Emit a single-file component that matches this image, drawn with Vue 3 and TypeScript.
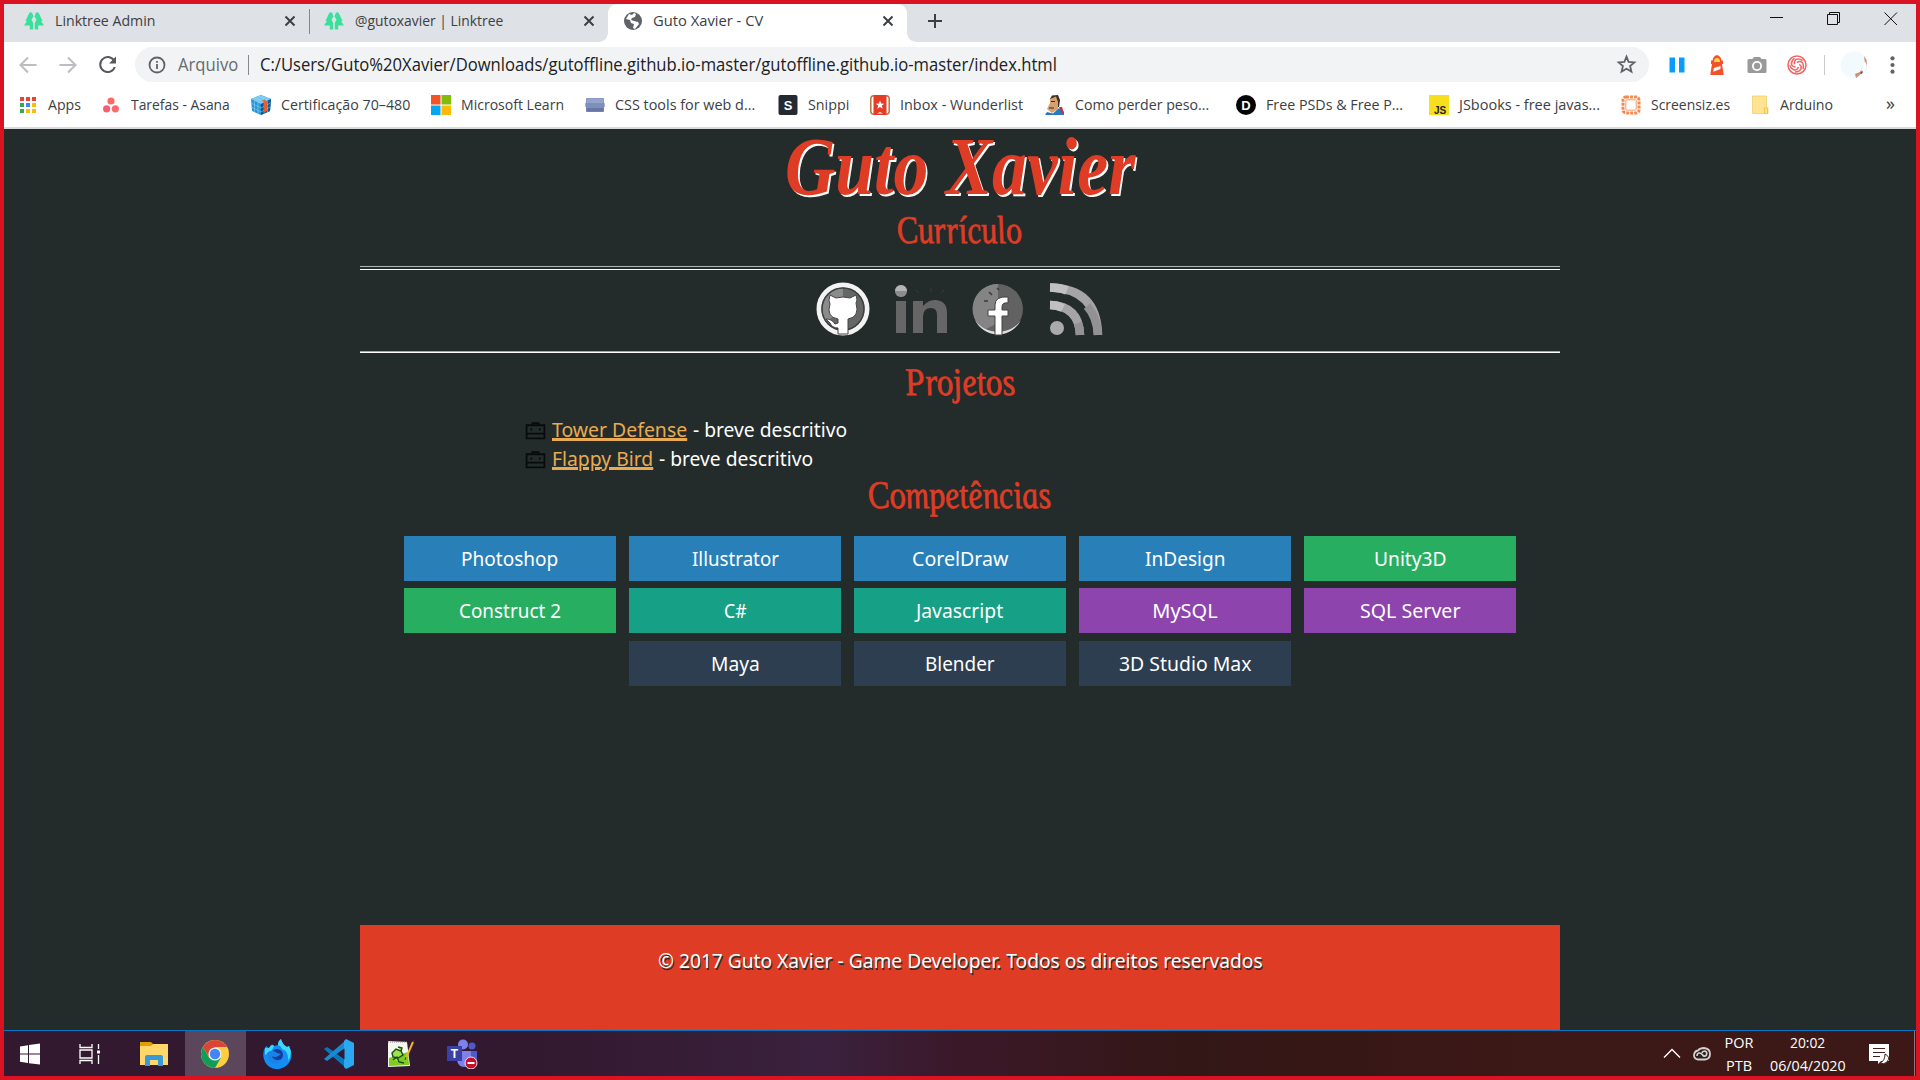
<script setup lang="ts">
import type { Directive } from 'vue'

interface Bookmark { icon: string; label: string; text: number; box: number }
interface Skill { name: string; kind: string; width: number }

// Condenses or widens a line of text to its nominal width.
const vFit: Directive<HTMLElement, number> = {
  mounted(el, binding) {
    const natural = el.offsetWidth
    if (!natural) return
    const scale = binding.value / natural
    el.style.transform = `scaleX(${scale})`
    el.style.marginRight = `${binding.value - natural}px`
  },
}

const bookmarks: Bookmark[] = [
  { icon: 'apps', label: 'Apps', text: 33, box: 83 },
  { icon: 'asana', label: 'Tarefas - Asana', text: 99, box: 150 },
  { icon: 'cube', label: 'Certificação 70–480', text: 129, box: 180 },
  { icon: 'ms', label: 'Microsoft Learn', text: 103, box: 154 },
  { icon: 'css', label: 'CSS tools for web d...', text: 140, box: 192.5 },
  { icon: 'snippi', label: 'Snippi', text: 41, box: 92.5 },
  { icon: 'wunder', label: 'Inbox - Wunderlist', text: 123, box: 174.5 },
  { icon: 'man', label: 'Como perder peso...', text: 134, box: 191.5 },
  { icon: 'psd', label: 'Free PSDs & Free P...', text: 137, box: 193 },
  { icon: 'js', label: 'JSbooks - free javas...', text: 141, box: 191.5 },
  { icon: 'screen', label: 'Screensiz.es', text: 79, box: 129.5 },
  { icon: 'folder', label: 'Arduino', text: 53, box: 136 },
]

const skills: Skill[] = [
  { name: 'Photoshop', kind: 'blue', width: 97 },
  { name: 'Illustrator', kind: 'blue', width: 87 },
  { name: 'CorelDraw', kind: 'blue', width: 96 },
  { name: 'InDesign', kind: 'blue', width: 80 },
  { name: 'Unity3D', kind: 'green', width: 73 },
  { name: 'Construct 2', kind: 'green', width: 102 },
  { name: 'C#', kind: 'teal', width: 23 },
  { name: 'Javascript', kind: 'teal', width: 87 },
  { name: 'MySQL', kind: 'purple', width: 65 },
  { name: 'SQL Server', kind: 'purple', width: 101 },
  { name: 'Maya', kind: 'navy', width: 49 },
  { name: 'Blender', kind: 'navy', width: 70 },
  { name: '3D Studio Max', kind: 'navy', width: 133 },
]

const projects = [
  { name: 'Tower Defense', width: 135 },
  { name: 'Flappy Bird', width: 101.5 },
]
</script>

<template>
  <div class="screen">
    <header class="tabs">
      <div v-for="(t, i) in [{ n: 'Linktree Admin', w: 100 }, { n: '@gutoxavier | Linktree', w: 148 }]" :key="t.n" class="tab" :class="{ second: i === 1 }">
        <svg class="fav" viewBox="0 0 20 20"><path fill="#39e09b" d="M5.500 1.500H8L9.500 5.500 7.500 8.500 9.200 12V18.500H5.800V14.500H0L3 10H1.500ZM14.500 1.500H12L10.500 5.500 12.500 8.500 10.800 12V18.500H14.200V14.500H20L17 10H18.500Z" /></svg>
        <span class="tab-name"><span v-fit="t.w" class="fit">{{ t.n }}</span></span>
        <svg class="close" viewBox="0 0 12 12"><path d="M1.500 1.500 10.500 10.500M10.500 1.500 1.500 10.500" /></svg>
      </div>
      <div class="tab active">
        <svg class="fav globe" viewBox="0 0 20 20"><circle cx="10" cy="10" r="9" fill="#5f6368" /><path fill="#fff" d="M3 8 7 9 8 12 11 13 10 17 12 18 16 13 15 11 11 10 8 9 9 7 12 6 13 3 11 2 9 4 6 3Z" /></svg>
        <span class="tab-name"><span v-fit="110" class="fit">Guto Xavier - CV</span></span>
        <svg class="close" viewBox="0 0 12 12"><path d="M1.500 1.500 10.500 10.500M10.500 1.500 1.500 10.500" /></svg>
      </div>
      <svg class="plus" viewBox="0 0 16 16"><path d="M8 1V15M1 8H15" /></svg>
      <div class="window-buttons">
        <svg viewBox="0 0 14 14"><path d="M0 6.500H13" /></svg>
        <svg viewBox="0 0 14 14"><path d="M.5 2.500H10.500V12.500H.5ZM2.500 2.500V.5H12.500V10.500H10.500" /></svg>
        <svg viewBox="0 0 14 14"><path d="M.5 .5 13 13M13 .5 .5 13" /></svg>
      </div>
    </header>

    <nav class="toolbar">
      <svg class="nav-icon pale" viewBox="0 0 20 20"><path d="M18.500 10H2.500M10 2.500 2.500 10 10 17.500" /></svg>
      <svg class="nav-icon pale" viewBox="0 0 20 20"><path d="M1.500 10H17.500M10 2.500 17.500 10 10 17.500" /></svg>
      <svg class="nav-icon" viewBox="0 0 20 20"><path d="M16 5.500A7.500 7.500 0 1 0 16.800 12" /><path class="solid" d="M18 1.500V8.500H11Z" /></svg>
      <div class="address">
        <svg class="info" viewBox="0 0 18 18"><circle cx="9" cy="9" r="7.500" /><path d="M9 8V13M9 5V6.800" /></svg>
        <span class="scheme"><span v-fit="60" class="fit">Arquivo</span></span>
        <span class="url"><span v-fit="797" class="fit">C:/Users/Guto%20Xavier/Downloads/gutoffline.github.io-master/gutoffline.github.io-master/index.html</span></span>
        <svg class="star" viewBox="0 0 20 20"><path d="M10 2.500 12 7.500 17.500 8 13.400 11.500 14.700 16.800 10 14 5.300 16.800 6.600 11.500 2.500 8 8 7.500Z" /></svg>
      </div>
      <div class="extensions">
        <svg viewBox="0 0 20 20"><path fill="#0a9bff" d="M2.500 2.500H8V17.500H2.500ZM12 2.500H17.500V17.500H12Z" /></svg>
        <svg viewBox="0 0 20 20"><path fill="#f4502a" d="M10 0Q14 1 14.500 5.500H16V9H15L16.500 18V20H3.500V18L5 9H4V5.500H5.500Q6 1 10 0Z" /><path fill="#ffd84a" d="M7 7Q7 3 10 3T13 7Z" /><path fill="#fff" d="M6.800 13 13.500 11V14L6.300 16.800Z" /></svg>
        <svg viewBox="0 0 20 20"><path fill="#9a9a9a" d="M2 4H5.500L7 2H13L14.500 4H18A1.500 1.500 0 0 1 19.500 5.500V16.500A1.500 1.500 0 0 1 18 18H2A1.500 1.500 0 0 1 .5 16.500V5.500A1.500 1.500 0 0 1 2 4Z" /><circle cx="10" cy="11" r="5" fill="#fff" /><circle cx="10" cy="11" r="3.200" fill="#9a9a9a" /></svg>
        <svg viewBox="0 0 20 20" class="spiral"><circle cx="10" cy="10" r="9" /><path v-for="n in 5" :key="n" :transform="`rotate(${n * 72} 10 10)`" d="M10 7.500C14 5 17.500 8 16 14" /></svg>
      </div>
      <i class="rule" />
      <svg class="avatar" viewBox="0 0 28 28"><circle cx="14" cy="14" r="13.500" fill="#f2fafd" /><path fill="#c98f76" d="M24 5 26.500 9 27 15 24 18 22 22 16 27 15 23 20 21 22 17 25 13Z" /><path fill="#fff" d="M25 10 27 15 23 21 21 19Z" /><path fill="#8f3438" d="M20 22 23 20 22 23Z" /></svg>
      <svg class="dots" viewBox="0 0 4 18"><circle cx="2" cy="3" r="1.900" /><circle cx="2" cy="9" r="1.900" /><circle cx="2" cy="15" r="1.900" /></svg>
    </nav>

    <nav class="bookmarks">
      <div v-for="b in bookmarks" :key="b.label" class="bookmark" :style="{ width: b.box + 'px' }">
        <svg viewBox="0 0 20 20">
          <template v-if="b.icon === 'apps'">
            <rect v-for="(c, n) in ['#ea4335', '#ea4335', '#ea4335', '#34a853', '#4285f4', '#fbbc05', '#34a853', '#fbbc05', '#fbbc05']" :key="n" :x="2 + (n % 3) * 6" :y="2 + Math.floor(n / 3) * 6" width="4" height="4" :fill="c" />
          </template>
          <template v-else-if="b.icon === 'asana'"><circle cx="10" cy="6" r="3.600" fill="#fb6a65" /><circle cx="5.600" cy="13.800" r="3.600" fill="#fa5c70" /><circle cx="14.400" cy="13.800" r="3.600" fill="#fa6a6d" /></template>
          <template v-else-if="b.icon === 'cube'"><path fill="#2896d5" d="M10 0 20 4 19 16 10 20 1 16 0 4Z" /><path fill="#73caf4" d="M10 0 20 4 10 9 0 4Z" /><path fill="#075a91" d="M10 9 20 4 19 16 10 20Z" /><path stroke="#a9d8ef" stroke-width=".5" fill="none" d="M0 8 10 13 19.500 8M.5 12 10 17 19 12M3.500 5.500V17M7 7V19M13 8V18.500M16.500 6V17M3 3 14 7M7 1 17 5" /><path fill="#ee5b2d" d="M13 7 16 5.500V16L13 17.500ZM10 6 14 4.500 15 7Z" /></template>
          <template v-else-if="b.icon === 'ms'"><path fill="#f35325" d="M0 0H9.500V9.500H0Z" /><path fill="#81bc06" d="M10.500 0H20V9.500H10.500Z" /><path fill="#05a6f0" d="M0 10.500H9.500V20H0Z" /><path fill="#ffba08" d="M10.500 10.500H20V20H10.500Z" /></template>
          <template v-else-if="b.icon === 'css'"><rect x="1" y="3" width="18" height="14" rx="1" fill="#7d8fbb" /><path fill="#93a4cd" d="M1.500 3.500H18.500V8H1.500Z" /><path fill="#6676a5" d="M1.500 13H18.500V16.500H1.500Z" /><path fill="#a9b5d6" d="M0 8H1V12H0ZM19 8H20V12H19Z" /></template>
          <template v-else-if="b.icon === 'snippi'"><rect x=".5" y="0" width="19" height="20" rx="2" fill="#252a30" /><text x="10" y="14.500" text-anchor="middle" class="badge" fill="#fff">S</text></template>
          <template v-else-if="b.icon === 'wunder'"><rect x=".8" y=".8" width="18.400" height="18.400" rx="3" fill="#fff" stroke="#b77b4d" stroke-width="1.600" /><rect x="3.500" y="0" width="13" height="20" rx="1" fill="#e83b25" /><path fill="#fff" d="M10 5.500 11.200 8.500 14.200 8.700 11.800 10.700 12.700 13.700 10 12 7.300 13.700 8.200 10.700 5.800 8.700 8.800 8.500ZM7 18.500 10 17 13 18.500Z" /></template>
          <template v-else-if="b.icon === 'man'"><path fill="#3b2d29" d="M5 4 7 .5 13 0 15 5 14 12 8 12Z" /><path fill="#d7a06d" d="M5 4 11 1.500 13 7 13 14 7 18 2 14 5 8Z" /><path fill="#2878c0" d="M0 20 2 17 8 18.500 14 13 19 17V20Z" /><path fill="#c62f35" d="M14 12 17 12 19 18 17 18Z" /><path d="M6 6.500H10M4 13H9" stroke="#332a25" /></template>
          <template v-else-if="b.icon === 'psd'"><circle cx="10" cy="10" r="10" fill="#050505" /><text x="10" y="14.500" text-anchor="middle" class="badge" fill="#fff">D</text></template>
          <template v-else-if="b.icon === 'js'"><path fill="#f7df1e" d="M0 0H20V20H0Z" /><text x="5" y="18.500" class="badge js" fill="#222">JS</text></template>
          <template v-else-if="b.icon === 'screen'"><rect x="2" y="2" width="16" height="16" rx="3" fill="none" stroke="#f58a4e" stroke-width="3" stroke-dasharray="3 1" /><rect x="4.800" y="4.800" width="10.400" height="10.400" rx="1" fill="#fff" stroke="#f17532" stroke-width=".7" /></template>
          <template v-else><path fill="#ffe391" stroke="#edcb61" stroke-width=".7" d="M2.500 1H16.500V12.500L18 13V18.500H2.500Z" /><path fill="#ffe391" stroke="#edc44b" d="M14.500 13H17.500V18.500H14.500Z" /></template>
        </svg>
        <span v-fit="b.text" class="fit">{{ b.label }}</span>
      </div>
      <span class="more">»</span>
    </nav>

    <main class="page">
      <div class="content">
        <h1><span v-fit="350" class="fit">Guto Xavier</span></h1>
        <h2 class="resume"><span v-fit="125" class="fit">Currículo</span></h2>
        <hr class="double">
        <div class="social">
          <svg viewBox="0 0 56 56"><circle cx="28" cy="28" r="24" fill="#666" stroke="#f3f3f3" stroke-width="5" /><path fill="#8b8b8b" d="M28 7A21 21 0 0 0 11 41L28 28Z" /><circle cx="28" cy="28" r="21" fill="none" stroke="#3c4141" stroke-width="1.500" /><path fill="#fff" stroke="#444" stroke-width="1" d="M15 14 21 17Q28 15 35 17L41 14Q43 20 41 22Q45 36 33 38V53H23V47Q17 47 15 42L11 38Q17 38 20 43L23 42V38Q11 36 15 23Q13 20 15 14Z" /></svg>
          <svg viewBox="0 0 56 56"><g fill="#666"><path d="M3 20H13V52H3ZM20 20H30V25Q36 18 43 19Q54 20 54 32V52H44V34Q44 27 38 27Q30 27 30 36V52H20Z" /><circle cx="8" cy="10" r="6" /></g><path fill="#b4b4b4" d="M2 10A6 6 0 0 1 14 10Z" /><path fill="#8c8c8c" d="M2 10H14A6 6 0 0 1 2 10Z" /><path stroke="#363b3b" d="M23 9 26 12M38 7V11M48 12 51 9" /></svg>
          <svg viewBox="0 0 56 56"><circle cx="28" cy="28" r="25" fill="#626262" /><path fill="#848484" d="M28 3A25 25 0 0 0 14 49L28 42Z" /><path fill="#dfdfdf" d="M5 39A25.500 25.500 0 0 0 51 39 27 25 0 0 1 5 39Z" /><path fill="#fff" stroke="#444" d="M25 54V35H18V29H25V24Q25 15 38 16V22Q32 21 32 26V29H38V35H32V54Z" /><path stroke="#383b3b" stroke-width="1.500" d="M14 20 18 20M19 11 22 14M27 7 29 9" /></svg>
          <svg viewBox="0 0 56 56"><circle cx="9" cy="47" r="7" fill="#aaa" /><path fill="none" stroke="#a5a5a5" stroke-width="8.500" d="M2 24Q31 25 32 54M2 6.500Q49 7.500 50 54" /><path fill="none" stroke="#c0c0c0" stroke-width="8.500" d="M2 24Q9 24 15 27M2 6.500Q12 6.500 19 9.500" /><path fill="none" stroke="#929292" stroke-width="8.500" d="M39 25Q49 36 50 54M30 42Q32 47 32 54" /></svg>
        </div>
        <hr class="single">
        <h2 class="projects-title"><span v-fit="110" class="fit">Projetos</span></h2>
        <ul class="projects">
          <li v-for="p in projects" :key="p.name">
            <svg viewBox="0 0 20 18"><path fill="none" stroke="#070b0b" stroke-width="1.700" d="M1.500 4H18.500V16.500H1.500ZM1.500 12H18.500M7 4V2H13V4M6 7V9M14 7V9" /></svg>
            <a href="#"><span v-fit="p.width" class="fit">{{ p.name }}</span></a>
            <span v-fit="154" class="fit">- breve descritivo</span>
          </li>
        </ul>
        <h2 class="skills-title"><span v-fit="183" class="fit">Competências</span></h2>
        <div class="skills">
          <div v-for="s in skills" :key="s.name" class="skill" :class="s.kind"><span v-fit="s.width" class="fit">{{ s.name }}</span></div>
        </div>
        <footer><span v-fit="605" class="fit">© 2017 Guto Xavier - Game Developer. Todos os direitos reservados</span></footer>
      </div>
    </main>

    <div class="taskbar">
      <div class="task"><svg viewBox="0 0 30 30"><path fill="#fff" d="M5 7.500 13 6.200V14.500H5ZM14 6 25 4.500V14.500H14ZM5 15.500H13V24L5 22.700ZM14 15.500H25V25.500L14 24.200Z" /></svg></div>
      <div class="task"><svg viewBox="0 0 30 30"><path fill="none" stroke="#fff" stroke-width="1.300" d="M5 5V8.500H17V5M5 25V21.500H17V25M5 11H17V19H5ZM23.500 5V10M23.500 16V25" /><path fill="#fff" d="M22 11.500H25V14.500H22Z" /></svg></div>
      <div class="task"><svg viewBox="0 0 30 30"><path fill="#dda000" d="M1 3H12L14 5V10H1Z" /><path fill="#ffd869" d="M1 7H12L14 5H29V26H1Z" /><path fill="#3a99d8" d="M6 27V18Q6 16 8 16H22Q24 16 24 18V27H19V21H11V27Z" /></svg></div>
      <div class="task selected"><svg viewBox="0 0 30 30"><circle cx="15" cy="15" r="14" fill="#ffcd40" /><path fill="#db4437" d="M2.900 8A14 14 0 0 1 27.100 8H15L9 18Z" /><path fill="#0f9d58" d="M2.900 8A14 14 0 0 0 15 29L21 18.500 15 21 9 18.500Z" /><circle cx="15" cy="15" r="6.600" fill="#eee" /><circle cx="15" cy="15" r="5.200" fill="#4285f4" /></svg></div>
      <div class="task"><svg viewBox="0 0 30 30"><path fill="#138df1" d="M4 7 7 9Q10 3 12 7L16 6Q16 2 19 0Q20 5 25 8L27 7Q33 19 25 26A14 14 0 0 1 3 23Q-1 14 4 7Z" /><path fill="#40d7ff" d="M16 6Q16 2 19 0Q20 5 25 8L27 7Q31 15 26 22Q27 12 20 10Q19 7 16 6ZM3 9 7 9Q10 4 12 7L9 13 3 16Z" /><circle cx="15" cy="16" r="6" fill="#173b9c" /><path fill="#1782e8" d="M5 14Q10 9 15 14L19 15Q14 20 10 17Q12 23 20 20Q15 28 7 22Z" /></svg></div>
      <div class="task"><svg viewBox="0 0 30 30"><path fill="#0878bd" d="M0 10 3 8 25 23 22 29Z" /><path fill="#168bd2" d="M0 20 3 22 24 7 22 1Z" /><path fill="#2aa8f2" d="M22 0 30 4V26L22 30 20 28V2Z" /><path fill="#33192f" d="M20.500 9.500V20.500L13 15Z" /></svg></div>
      <div class="task"><svg viewBox="0 0 30 30"><path fill="#f5f6ed" d="M3 2 22 3 25 27 3 28Z" /><path fill="#7ecb22" d="M4 19 23 13 24 26 4 27Z" /><path fill="#9de345" stroke="#174b1c" stroke-width="1.400" d="M7 14 11 10 16 12 18 16 13 19 8 18ZM13 8 17 9 16 12M8 21 12 18 14 23 19 24" /><path stroke="#888" stroke-dasharray="1 1" d="M3 3H22" /><path stroke="#e9b72b" stroke-width="2" d="M21 19 28 3" /><path stroke="#553425" d="M20 21 21 18M28 3 29 1" /></svg></div>
      <div class="task"><svg class="teams" viewBox="0 0 32 30"><circle cx="17" cy="5.500" r="5" fill="#7b83eb" /><circle cx="26" cy="7" r="3.500" fill="#5059c9" /><path fill="#5059c9" d="M23 12H31V21Q31 25 26 25L20 22Z" /><path fill="#7b83eb" d="M12 12H25V21Q24 28 18 28T11 21Z" /><path fill="#3941a6" d="M1 7H16V22H1Z" /><text x="8.500" y="19" text-anchor="middle" class="badge tee" fill="#fff">T</text><circle cx="25" cy="24" r="6" fill="#c4102d" stroke="#f4dce2" /><path stroke="#fff" stroke-width="2" d="M21.500 24H28.500" /></svg></div>
      <div class="tray">
        <svg class="chevron" viewBox="0 0 18 10"><path d="M1 9 9 1 17 9" /></svg>
        <svg class="cloud" viewBox="0 0 18 14"><path fill="#2c2020" stroke="#d5d0d0" stroke-width="1.800" d="M5 3.500Q7 1 11 1 17 1.500 17 7 17 12 12 12.500H5Q1 12 1 8 1.500 4 5 3.500Z" /><path fill="none" stroke="#d5d0d0" stroke-width="1.600" d="M4 9Q4 6 6.500 6 8.500 6 10 8.500 12 10 13.500 8 14.500 5 12 4 9.500 4 9 6" /></svg>
        <div class="stack lang"><span>POR</span><span>PTB</span></div>
        <div class="stack clock"><span v-fit="35" class="fit">20:02</span><span v-fit="76" class="fit">06/04/2020</span></div>
        <svg class="notice" viewBox="0 0 22 22"><path fill="#fff" d="M1 1H21V18H13L10 21V18H1Z" /><path stroke="#421e1d" stroke-width="1.200" d="M5 5.500H17M5 9.500H17M5 13.500H12" /><path fill="#fff" stroke="#421e1d" d="M17 11Q23 14 19 19 16 22 12 20 17 18 17 11Z" /></svg>
        <i class="show-desktop" />
      </div>
    </div>
  </div>
</template>

<style>
html, body { margin: 0; }
</style>
<style scoped>
* { box-sizing: border-box; }
.screen { width: 1920px; height: 1080px; overflow: hidden; border: 4px solid #d91322; display: flex; flex-direction: column; background: #242c2b; font-family: "Open Sans", "Noto Sans", sans-serif; }
.fit { display: inline-block; white-space: pre; transform-origin: 0 50%; flex: none; }
svg { display: block; flex: none; }

.tabs { height: 38px; background: #dee1e6; display: flex; color: #3c4043; font-size: 15px; }
.tab { width: 306px; height: 38px; display: flex; align-items: center; padding: 0 14px 4px 20px; position: relative; }
.tab.second { width: 298px; padding-left: 14px; padding-right: 13px; }
.tab:first-child::after { content: ""; position: absolute; right: 0; top: 5px; width: 1px; height: 25px; background: #85898d; }
.tab.active { width: 299px; background: #fff; border-radius: 9px 9px 0 0; padding-left: 15px; padding-right: 13px; }
.tab.active::before, .tab.active::after { content: ""; position: absolute; bottom: 0; width: 9px; height: 9px; }
.tab.active::before { left: -9px; background: radial-gradient(circle at 0 0, transparent 8.500px, #fff 9px); }
.tab.active::after { right: -9px; background: radial-gradient(circle at 100% 0, transparent 8.500px, #fff 9px); }
.fav { width: 20px; height: 20px; margin-right: 10.500px; }
.fav.globe { margin-right: 9.500px; }
.tab-name { flex: 1; display: flex; padding-bottom: 2px; }
.close { width: 12px; height: 12px; fill: none; stroke: #3c4043; stroke-width: 2; }
.plus { width: 16px; height: 16px; margin: 9px 0 0 20px; stroke: #3c4043; stroke-width: 2; }
.window-buttons { margin-left: auto; display: flex; gap: 43px; padding: 8px 18px 0 0; }
.window-buttons svg { width: 14px; height: 14px; fill: none; stroke: #111; stroke-width: 1; }
.window-buttons svg:first-child { margin-top: -1px; }

.toolbar { height: 43px; background: #fff; display: flex; align-items: center; padding: 2px 21px 0 14px; }
.nav-icon { width: 20px; height: 20px; margin-right: 20px; fill: none; stroke: #55595d; stroke-width: 2; }
.nav-icon.pale { stroke: #bbbdc0; }
.nav-icon .solid { fill: #55595d; stroke: none; }
.address { width: 1514px; height: 35px; border-radius: 18px; background: #f1f3f4; display: flex; align-items: center; padding: 0 12px 0 13px; font-size: 17.500px; color: #202124; margin-left: -3px; }
.info { width: 18px; height: 18px; margin-right: 12px; fill: none; stroke: #5f6368; stroke-width: 1.800; }
.scheme { width: 71px; display: flex; color: #666b70; border-right: 1px solid #85898d; height: 20px; align-items: center; padding-bottom: 1px; }
.url { flex: 1; margin-left: 11px; display: flex; padding-bottom: 2px; }
.star { width: 21px; height: 21px; fill: none; stroke: #5f6368; stroke-width: 1.700; }
.extensions { display: flex; gap: 20px; margin-left: 18px; }
.extensions svg { width: 20px; height: 20px; }
.spiral { fill: none; stroke: #f06464; stroke-width: 1.500; }
.rule { width: 1px; height: 20px; background: #c8cacc; margin-left: 17px; }
.avatar { width: 28px; height: 28px; margin-left: 15px; }
.dots { width: 5px; height: 20px; fill: #5f6368; margin-left: auto; }

.bookmarks { height: 44px; flex: none; background: #fff; border-bottom: 2px solid #d8dadc; display: flex; padding: 0 0 2px 14px; align-items: center; color: #3c4043; font-size: 15px; }
.bookmark { display: flex; align-items: center; gap: 10px; flex: none; }
.bookmark svg { width: 20px; height: 20px; }
.bookmark .fit { padding-bottom: 2px; }
.badge { font: bold 13px "Liberation Sans", sans-serif; }
.badge.js { font-size: 10px; }
.badge.tee { font-size: 12px; }
.more { font-size: 18px; line-height: 20px; padding-bottom: 4px; }

.page { height: 901px; flex: none; display: flex; justify-content: center; color: #fff; font-family: "Noto Sans", sans-serif; }
.content { width: 1200px; display: flex; flex-direction: column; }
h1, h2 { margin: 0; display: flex; justify-content: center; flex: none; font-family: "Liberation Serif", serif; color: #de3c25; }
h1 { height: 84px; font-size: 82px; line-height: 76px; font-style: italic; font-weight: 700; text-shadow: 2px 2px #fff; }
h2 { font-size: 39px; line-height: 44px; font-weight: 400; font-style: italic; -webkit-text-stroke: .8px #de3c25; transform: skewX(10deg); }
.resume { height: 53px; line-height: 33px; }
hr { width: 100%; margin: 0; border: 0; flex: none; }
.double { height: 4px; border-top: 1px solid #b4b7b7; border-bottom: 1px solid #fff; }
.single { height: 2px; border-top: 1px solid #a2a5a5; border-bottom: 1px solid #fff; }
.social { height: 81px; flex: none; display: flex; gap: 21.500px; justify-content: center; padding: 11px 1px 0 0; }
.social svg { width: 56px; height: 56px; }
.projects-title { height: 62px; padding-top: 7px; }
.projects { list-style: none; margin: 0; padding: 0 0 0 165px; height: 58px; font-size: 20px; }
.projects li { height: 29px; display: flex; align-items: center; white-space: nowrap; }
.projects svg { width: 21px; height: 19px; margin: 2px 6px 0 0; }
.projects a { display: flex; color: #e8ab52; margin: 0 5.500px 0 0; }
.projects a .fit { text-decoration: underline; text-decoration-thickness: 2px; text-underline-offset: 2px; }
.skills-title { height: 63px; padding-top: 0; }
.skills { display: flex; flex-wrap: wrap; justify-content: center; gap: 7.400px 13px; padding: 0 44px; }
.skill { width: 212px; height: 45px; display: flex; align-items: center; justify-content: center; font-size: 20px; line-height: 45px; }
.blue { background: #2980b9; }
.green { background: #27ae60; }
.teal { background: #16a085; }
.purple { background: #8e44ad; }
.navy { background: #2c3e50; }
footer { height: 105px; margin-top: auto; background: #de3c25; display: flex; justify-content: center; padding-top: 21px; font-size: 20px; line-height: 30px; text-shadow: 1px 2px #27302d; }

.taskbar { height: 46px; flex: none; border-top: 1px solid #0875c4; background: linear-gradient(90deg, #33192f 0%, #33192f 28%, #3a213d 43%, #3b1828 50%, #331716 62%, #3c1816 80%, #3d1817 100%); display: flex; align-items: center; }
.task { width: 61px; height: 45px; display: flex; align-items: center; justify-content: center; margin-right: .7px; }
.task:first-child { width: 52px; margin-right: 4px; }
.task:nth-child(2) { width: 60px; margin-right: 3px; }
.task svg { width: 30px; height: 30px; }
.task.selected { background: #5c465c; }
.task .teams { width: 32px; }
.tray { height: 45px; margin-left: auto; display: flex; align-items: center; color: #fff; font-size: 15px; }
.chevron { width: 18px; height: 11px; margin-right: 12px; fill: none; stroke: #fff; stroke-width: 1.400; }
.cloud { width: 18px; height: 14px; margin-right: 14px; }
.stack { display: flex; flex-direction: column; align-items: center; line-height: 23px; }
.lang { width: 28px; font-size: 14.500px; margin-right: 16px; }
.clock { width: 78px; }
.notice { width: 22px; height: 22px; margin: 0 24px 0 21px; }
.show-desktop { width: 1px; height: 45px; background: #89757b; margin-right: 1px; }
</style>
